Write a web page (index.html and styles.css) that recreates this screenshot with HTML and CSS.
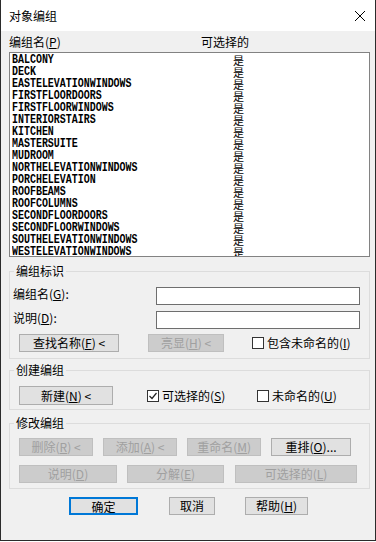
FILE: index.html
```html
<html lang="zh">
<head>
  <meta charset="UTF-8">
  <link rel="stylesheet" href="styles.css">
</head>
<body>
<div class="window">
  <div class="titlebar">
    <span class="title">对象编组</span>
    <svg class="close" width="12" height="12" viewBox="0 0 12 12">
      <path d="M1 1 L11 11 M11 1 L1 11" stroke="#000" stroke-width="1" fill="none"/>
    </svg>
  </div>
  <div class="content">
    <div class="list-header">
      <span class="col-name">编组名(<u>P</u>)</span>
      <span class="col-sel">可选择的</span>
    </div>
    <div class="list" id="list"></div>

    <fieldset class="group group-id">
      <legend>编组标识</legend>
      <div class="field-row">
        <label class="field-label">编组名(<u>G</u>):</label>
        <input class="field-input" type="text">
      </div>
      <div class="field-row second">
        <label class="field-label">说明(<u>D</u>):</label>
        <input class="field-input" type="text">
      </div>
      <div class="btn-row find-row">
        <button class="btn w-find">查找名称(<u>F</u>) &lt;</button>
        <button class="btn disabled w-show">亮显(<u>H</u>) &lt;</button>
        <span class="check check-include"><span class="box"></span>包含未命名的(<u>I</u>)</span>
      </div>
    </fieldset>

    <fieldset class="group group-create">
      <legend>创建编组</legend>
      <div class="btn-row">
        <button class="btn w-new">新建(<u>N</u>) &lt;</button>
        <span class="check check-sel">
          <span class="box">
            <svg width="10" height="10" viewBox="0 0 10 10"><path d="M1.5 5 L4 7.5 L8.5 2" stroke="#222" stroke-width="1.2" fill="none"/></svg>
          </span>可选择的(<u>S</u>)
        </span>
        <span class="check"><span class="box"></span>未命名的(<u>U</u>)</span>
      </div>
    </fieldset>

    <fieldset class="group group-edit">
      <legend>修改编组</legend>
      <div class="btn-row edit-row1">
        <button class="btn disabled w-a">删除(<u>R</u>) &lt;</button>
        <button class="btn disabled w-a">添加(<u>A</u>) &lt;</button>
        <button class="btn disabled w-a">重命名(<u>M</u>)</button>
        <button class="btn w-order">重排(<u>O</u>)...</button>
      </div>
      <div class="btn-row edit-row2">
        <button class="btn disabled w-desc">说明(<u>D</u>)</button>
        <button class="btn disabled w-expl">分解(<u>E</u>)</button>
        <button class="btn disabled w-selb">可选择的(<u>L</u>)</button>
      </div>
    </fieldset>

    <div class="footer">
      <button class="btn default w-ok">确定</button>
      <button class="btn w-cancel">取消</button>
      <button class="btn w-help">帮助(<u>H</u>)</button>
    </div>
  </div>
</div>
<script>
  // Lista de grupos
  var grupos = ["BALCONY", "DECK", "EASTELEVATIONWINDOWS", "FIRSTFLOORDOORS", "FIRSTFLOORWINDOWS",
    "INTERIORSTAIRS", "KITCHEN", "MASTERSUITE", "MUDROOM", "NORTHELEVATIONWINDOWS", "PORCHELEVATION",
    "ROOFBEAMS", "ROOFCOLUMNS", "SECONDFLOORDOORS", "SECONDFLOORWINDOWS", "SOUTHELEVATIONWINDOWS",
    "WESTELEVATIONWINDOWS"];
  var list = document.getElementById("list");
  grupos.forEach(function(nombre) {
    var row = document.createElement("div");
    row.className = "list-row";
    row.innerHTML = '<span class="row-name"><span class="name-text">' + nombre +
      '</span></span><span class="row-sel">是</span>';
    list.appendChild(row);
  });
</script>
</body>
</html>
```

FILE: styles.css
```css
body {
  margin: 0;
  background: #ffffff;
  font-family: "Noto Sans CJK SC", "Liberation Sans", sans-serif;
  font-size: 12px;
  color: #000000;
}

.window {
  width: 376px;
  height: 541px;
  box-sizing: border-box;
  border: 1px solid #2b2b2b;
  border-top: none;
  background: #f0f0f0;
}

.titlebar {
  height: 31px;
  background: #ffffff;
  display: flex;
  align-items: center;
  justify-content: space-between;
  padding: 0 9px 0 8px;
}

.title {
  font-size: 12px;
  line-height: 16px;
}

.close {
  margin-top: 1px;
}

.content {
  padding: 0 5px 0 8px;
}

.list-header {
  height: 21px;
  line-height: 21px;
  display: flex;
}

.col-name {
  width: 192px;
}

.list {
  height: 205px;
  box-sizing: border-box;
  border: 1px solid #828282;
  background: #ffffff;
  padding: 1px 0 0 2px;
  overflow: hidden;
}

.list-row {
  height: 12px;
  display: flex;
}

.row-name {
  width: 220px;
  height: 12px;
}

/* letras altas y estrechas, como la fuente de mapa de bits */
.name-text {
  display: inline-block;
  font-family: "Liberation Mono", monospace;
  font-size: 12px;
  line-height: 12px;
  font-weight: bold;
  transform: scaleX(0.83);
  transform-origin: left center;
  white-space: nowrap;
}

.row-sel {
  font-size: 11px;
  line-height: 12px;
  height: 12px;
  margin-left: 1px;
}

.group {
  margin: 0;
  border: 1px solid #dcdcdc;
  padding: 8px 8px 6px 3px;
  min-width: 0;
}

.group legend {
  margin-left: 1px;
  padding: 0 2px;
  line-height: 16px;
}

.group-id {
  margin-top: 6px;
}

.group-create {
  margin-top: 3px;
  padding-bottom: 4px;
}

.group-edit {
  margin-top: 5px;
  padding-top: 7px;
  padding-bottom: 5px;
}

.field-row {
  display: flex;
  align-items: center;
  height: 18px;
}

.field-row.second {
  margin-top: 6px;
}

.field-label {
  width: 143px;
  line-height: 16px;
  margin-top: -4px;
}

.field-input {
  width: 204px;
  height: 18px;
  box-sizing: border-box;
  border: 1px solid #6e6e6e;
  background: #ffffff;
  padding: 0;
  margin: 0;
}

.btn-row {
  display: flex;
  align-items: center;
  padding-left: 6px;
}

.find-row {
  margin-top: 5px;
}

.btn {
  height: 18px;
  box-sizing: border-box;
  border: 1px solid #adadad;
  background: #e1e1e1;
  font-family: "Noto Sans CJK SC", "Liberation Sans", sans-serif;
  font-size: 12px;
  line-height: 16px;
  padding: 0;
  margin: 0;
  color: #000000;
}

.btn.disabled {
  background: #cccccc;
  border-color: #bfbfbf;
  color: #a0a0a0;
}

.btn.default {
  border: 2px solid #0078d7;
}

.w-find { width: 100px; }
.w-show { width: 76px; margin-left: 29px; }
.check-include { margin-left: 28px; }

.w-new { width: 94px; height: 19px; }
.check-sel { margin-left: 34px; width: 110px; }

.edit-row1 .btn { margin-right: 10px; }
.w-a { width: 76px; }
.w-order { width: 82px; }

.edit-row2 {
  margin-top: 9px;
}
.w-desc { width: 98px; margin-right: 10px; }
.w-expl { width: 97px; margin-right: 11px; }
.w-selb { width: 122px; }

.check {
  display: flex;
  align-items: center;
  line-height: 16px;
}

.box {
  width: 12px;
  height: 12px;
  box-sizing: border-box;
  border: 1px solid #333333;
  background: #ffffff;
  margin-right: 3px;
  display: flex;
  align-items: center;
  justify-content: center;
}

.footer {
  display: flex;
  margin-top: 8px;
  padding-left: 60px;
}

.w-ok { width: 69px; }
.w-cancel { width: 46px; margin-left: 31px; }
.w-help { width: 63px; margin-left: 30px; }
```
